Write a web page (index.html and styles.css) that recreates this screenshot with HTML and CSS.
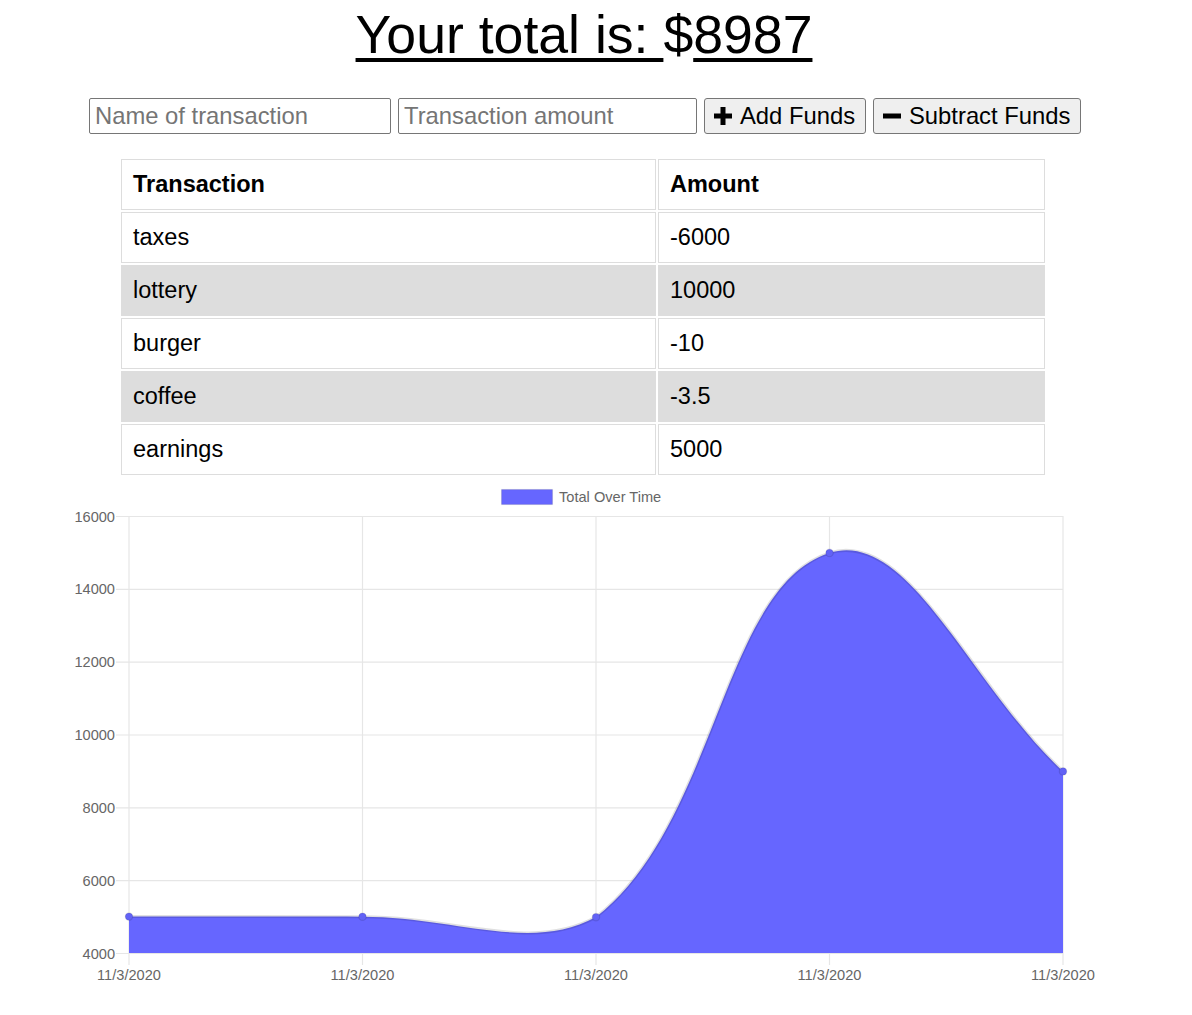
FILE: index.html
```html
<!DOCTYPE html>
<html lang="en">
<head>
<meta charset="utf-8">
<title>Budget Tracker</title>
<link rel="stylesheet" href="styles.css">
</head>
<body>
<div class="main">
  <h1 class="total"><span class="ul">Your total is: </span>$<span class="ul">8987</span></h1>
  <form class="entry">
    <input class="field field-name" type="text" placeholder="Name of transaction">
    <input class="field field-amount" type="number" placeholder="Transaction amount">
    <button class="btn btn-add" type="button"><svg class="ico" viewBox="0 0 18 18" width="18" height="18"><path d="M6.5 0h5v6.5h6.5v5h-6.5v6.5h-5v-6.5H0v-5h6.5z" fill="#000"/></svg>Add Funds</button>
    <button class="btn btn-sub" type="button"><svg class="ico" viewBox="0 0 18 18" width="18" height="18"><rect x="0" y="6.5" width="18" height="5" fill="#000"/></svg>Subtract Funds</button>
  </form>
  <table class="tx">
    <thead>
      <tr><th class="c1">Transaction</th><th class="c2">Amount</th></tr>
    </thead>
    <tbody>
      <tr><td>taxes</td><td>-6000</td></tr>
      <tr><td>lottery</td><td>10000</td></tr>
      <tr><td>burger</td><td>-10</td></tr>
      <tr><td>coffee</td><td>-3.5</td></tr>
      <tr><td>earnings</td><td>5000</td></tr>
    </tbody>
  </table>
</div>
<svg class="chart" width="1192" height="538" viewBox="0 477 1192 538">
  <g class="legend">
    <rect x="501.5" y="489.5" width="51" height="15" fill="#6666ff" stroke="rgba(0,0,0,0.1)" stroke-width="1.2"/>
    <text x="559" y="501.5" class="lbl">Total Over Time</text>
  </g>
  <g class="grid" stroke="#e6e6e6" stroke-width="1.2">
    <line x1="116" y1="516.5" x2="1063" y2="516.5"/>
    <line x1="116" y1="589.3" x2="1063" y2="589.3"/>
    <line x1="116" y1="662.2" x2="1063" y2="662.2"/>
    <line x1="116" y1="735" x2="1063" y2="735"/>
    <line x1="116" y1="807.8" x2="1063" y2="807.8"/>
    <line x1="116" y1="880.7" x2="1063" y2="880.7"/>
    <line x1="116" y1="953.5" x2="1063" y2="953.5"/>
    <line x1="129" y1="516" x2="129" y2="965"/>
    <line x1="362.5" y1="516" x2="362.5" y2="965"/>
    <line x1="596" y1="516" x2="596" y2="965"/>
    <line x1="829.5" y1="516" x2="829.5" y2="965"/>
    <line x1="1063" y1="516" x2="1063" y2="965"/>
  </g>
  <g class="ylabels">
    <text x="115" y="521.5" class="lbl" text-anchor="end">16000</text>
    <text x="115" y="594.3" class="lbl" text-anchor="end">14000</text>
    <text x="115" y="667.2" class="lbl" text-anchor="end">12000</text>
    <text x="115" y="740" class="lbl" text-anchor="end">10000</text>
    <text x="115" y="812.8" class="lbl" text-anchor="end">8000</text>
    <text x="115" y="885.7" class="lbl" text-anchor="end">6000</text>
    <text x="115" y="958.5" class="lbl" text-anchor="end">4000</text>
  </g>
  <g class="xlabels">
    <text x="129" y="979.5" class="lbl" text-anchor="middle">11/3/2020</text>
    <text x="362.5" y="979.5" class="lbl" text-anchor="middle">11/3/2020</text>
    <text x="596" y="979.5" class="lbl" text-anchor="middle">11/3/2020</text>
    <text x="829.5" y="979.5" class="lbl" text-anchor="middle">11/3/2020</text>
    <text x="1063" y="979.5" class="lbl" text-anchor="middle">11/3/2020</text>
  </g>
  <path d="M129,916.6 C222.4,916.6 269.1,916.6 362.5,916.7 C455.9,916.8 530.5,953 596,917.1 C717.3,822.6 722.1,586.4 829.5,552.9 C908.9,528.1 969.6,684 1063,771.4 L1063,953 L129,953 Z" fill="#6666ff"/>
  <path d="M129,916.6 C222.4,916.6 269.1,916.6 362.5,916.7 C455.9,916.8 530.5,953 596,917.1 C717.3,822.6 722.1,586.4 829.5,552.9 C908.9,528.1 969.6,684 1063,771.4" fill="none" stroke="rgba(0,0,0,0.12)" stroke-width="3"/>
  <g class="pts" fill="#6262f5" stroke="rgba(0,0,0,0.1)" stroke-width="1.2">
    <circle cx="129" cy="916.6" r="3.7"/>
    <circle cx="362.5" cy="916.7" r="3.7"/>
    <circle cx="596" cy="917.1" r="3.7"/>
    <circle cx="829.5" cy="552.9" r="3.7"/>
    <circle cx="1063" cy="771.4" r="3.7"/>
  </g>
</svg>
</body>
</html>
```

FILE: styles.css
```css
html, body {
  margin: 0;
  padding: 0;
  background: #fff;
}
body {
  font-family: "Liberation Sans", Arial, sans-serif;
  color: #000;
  overflow: hidden;
}
.main {
  padding-right: 24px;
  display: flex;
  flex-direction: column;
  align-items: center;
}
.total {
  margin: 4px 0 0;
  font-size: 53.6px;
  line-height: 61px;
  font-weight: normal;
  text-align: center;
}
.ul {
  text-decoration: underline;
  text-decoration-thickness: 4px;
  text-underline-offset: 5px;
}
.entry {
  margin-top: 33px;
  margin-left: 2px;
  display: flex;
  align-items: center;
  gap: 7px;
}
.field {
  box-sizing: border-box;
  height: 36px;
  border: 1px solid #767676;
  border-radius: 2px;
  padding: 0 5px;
  font-family: "Liberation Sans", Arial, sans-serif;
  font-size: 23.8px;
  color: #000;
  background: #fff;
  margin: 0;
}
.field::placeholder {
  color: #757575;
}
.field-name { width: 302px; }
.field-amount { width: 299px; -moz-appearance: textfield; }
.field-amount::-webkit-outer-spin-button,
.field-amount::-webkit-inner-spin-button { -webkit-appearance: none; margin: 0; }
.btn {
  box-sizing: border-box;
  height: 36px;
  margin: -1px 0 0;
  display: flex;
  align-items: center;
  gap: 8px;
  padding: 0 9px;
  background: #efefef;
  border: 1px solid #767676;
  border-radius: 3px;
  font-family: "Liberation Sans", Arial, sans-serif;
  font-size: 23.8px;
  color: #000;
  white-space: nowrap;
  flex: none;
}
.btn-add { width: 162px; }
.btn-sub { width: 208px; }
.ico { display: block; flex: none; }
.tx {
  margin-top: 23px;
  margin-right: 2px;
  width: 928px;
  border-collapse: separate;
  border-spacing: 2px;
  font-size: 23.5px;
}
.tx th, .tx td {
  box-sizing: border-box;
  height: 51px;
  border: 1px solid #dddddd;
  padding: 0 11px;
  text-align: left;
  line-height: 27px;
}
.tx th { font-weight: bold; }
.tx .c1 { width: 535px; }
.tx .c2 { width: 387px; }
.tx tbody tr:nth-child(even) td { background: #dddddd; }
.chart {
  display: block;
}
.lbl {
  font-family: "Liberation Sans", Arial, sans-serif;
  font-size: 14.6px;
  fill: #666666;
}
```
